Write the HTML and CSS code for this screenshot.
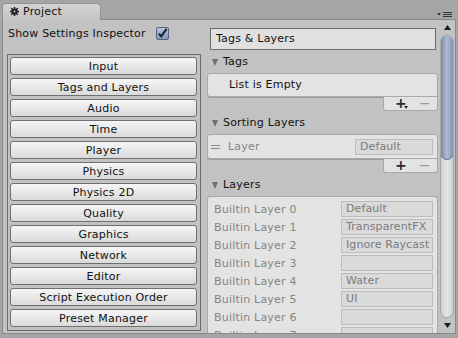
FILE: index.html
```html
<!DOCTYPE html>
<html lang="en">
<head>
    <meta charset="UTF-8">
    <title>Project Settings</title>
    <link rel="stylesheet" href="styles.css">
</head>
<body>
<div class="tabbar">
    <div class="tab">
        <svg class="gear" width="9" height="9" viewBox="0 0 9 9">
            <g stroke="#1e1e1e" stroke-width="1.6">
                <line x1="4.5" y1="0" x2="4.5" y2="9"/>
                <line x1="0" y1="4.5" x2="9" y2="4.5"/>
                <line x1="1.3" y1="1.3" x2="7.7" y2="7.7"/>
                <line x1="7.7" y1="1.3" x2="1.3" y2="7.7"/>
            </g>
            <circle cx="4.5" cy="4.5" r="3" fill="#1e1e1e"/>
            <circle cx="4.5" cy="4.5" r="1" fill="#cfcfcf"/>
        </svg>
        <span>Project</span>
    </div>
    <svg class="menu" width="16" height="6" viewBox="0 0 16 6">
        <polygon points="0,1 4,1 2,3.5" fill="#333"/>
        <rect x="6" y="0" width="9" height="1" fill="#333"/>
        <rect x="6" y="2" width="9" height="1" fill="#333"/>
        <rect x="6" y="4" width="9" height="1" fill="#333"/>
    </svg>
</div>

<div class="window">
    <div class="side">
        <div class="toggle">
            <span>Show Settings Inspector</span>
            <svg class="check" width="13" height="13" viewBox="0 0 13 13">
                <defs>
                    <linearGradient id="cb" x1="0" y1="0" x2="0" y2="1">
                        <stop offset="0" stop-color="#b9c6da"/>
                        <stop offset="1" stop-color="#8194b4"/>
                    </linearGradient>
                </defs>
                <rect x="0.5" y="0.5" width="12" height="12" rx="1.5" fill="url(#cb)" stroke="#56647c"/>
                <path d="M2.8 6.6 L5.2 9.4 L10.6 1.8" fill="none" stroke="#152238" stroke-width="2"/>
            </svg>
        </div>
        <div class="nav">
            <div class="btn">Input</div>
            <div class="btn">Tags and Layers</div>
            <div class="btn">Audio</div>
            <div class="btn">Time</div>
            <div class="btn">Player</div>
            <div class="btn">Physics</div>
            <div class="btn">Physics 2D</div>
            <div class="btn">Quality</div>
            <div class="btn">Graphics</div>
            <div class="btn">Network</div>
            <div class="btn">Editor</div>
            <div class="btn">Script Execution Order</div>
            <div class="btn">Preset Manager</div>
        </div>
    </div>

    <div class="main">
        <div class="title">Tags &amp; Layers</div>

        <div class="fold"><i class="tri"></i>Tags</div>
        <div class="list list-tags">List is Empty</div>
        <div class="foot">
            <span class="plus">+<i class="drop"></i></span><span class="minus">&minus;</span>
        </div>

        <div class="fold"><i class="tri"></i>Sorting Layers</div>
        <div class="list list-sort">
            <span class="handle"></span>
            <span class="label">Layer</span>
            <span class="field field-sort">Default</span>
        </div>
        <div class="foot">
            <span class="plus">+</span><span class="minus">&minus;</span>
        </div>

        <div class="fold"><i class="tri"></i>Layers</div>
        <div class="list list-layers">
            <div class="row"><span class="label">Builtin Layer 0</span><span class="field">Default</span></div>
            <div class="row"><span class="label">Builtin Layer 1</span><span class="field">TransparentFX</span></div>
            <div class="row"><span class="label">Builtin Layer 2</span><span class="field">Ignore Raycast</span></div>
            <div class="row"><span class="label">Builtin Layer 3</span><span class="field"></span></div>
            <div class="row"><span class="label">Builtin Layer 4</span><span class="field">Water</span></div>
            <div class="row"><span class="label">Builtin Layer 5</span><span class="field">UI</span></div>
            <div class="row"><span class="label">Builtin Layer 6</span><span class="field"></span></div>
            <div class="row"><span class="label">Builtin Layer 7</span><span class="field"></span></div>
        </div>
    </div>

    <div class="scroll">
        <svg class="arrow" width="7" height="5" viewBox="0 0 7 5"><polygon points="0,5 7,5 3.5,0" fill="#1a1a1a"/></svg>
        <div class="track">
            <div class="thumb"></div>
        </div>
        <svg class="arrow" width="7" height="5" viewBox="0 0 7 5"><polygon points="0,0 7,0 3.5,5" fill="#1a1a1a"/></svg>
    </div>
</div>
</body>
</html>
```

FILE: styles.css
```css
* {
    padding: 0;
    margin: 0;
    box-sizing: border-box;
}

body {
    width: 458px;
    height: 338px;
    overflow: hidden;
    background: #a5a5a5;
    font-family: "DejaVu Sans", Verdana, sans-serif;
    font-size: 11px;
    letter-spacing: 0.2px;
    color: #111;
}

/* tab strip */
.tabbar {
    height: 19px;
    display: flex;
    justify-content: space-between;
    align-items: flex-end;
}

.tab {
    width: 99px;
    height: 17px;
    margin-left: 2px;
    margin-bottom: -1px;
    position: relative;
    z-index: 1;
    display: flex;
    align-items: center;
    padding: 0 0 1px 7px;
    border: 1px solid #939393;
    border-bottom: 0;
    border-radius: 4px 4px 0 0;
    background: linear-gradient(#d3d3d3, #c4c4c4);
}

.tab span {
    margin-left: 4px;
}

.menu {
    align-self: flex-start;
    margin: 12px 5px 0 0;
}

/* window */
.window {
    height: 315px;
    margin: 0 2px;
    display: flex;
    border: 1px solid #888;
    background: #c2c2c2;
}

.side {
    width: 201px;
    padding-left: 4px;
    display: flex;
    flex-direction: column;
}

.toggle {
    height: 26px;
    display: flex;
    align-items: center;
    padding-left: 1px;
}

.check {
    margin-left: 10px;
}

.nav {
    flex: 1;
    width: 194px;
    margin: 8px 0 2px;
    padding: 2px 3px 0 2px;
    border: 1px solid #6a6a6a;
    overflow: hidden;
}

.btn {
    height: 18px;
    margin-bottom: 3px;
    line-height: 17px;
    text-align: center;
    border: 1px solid #6f6f6f;
    border-radius: 3px;
    background: linear-gradient(#f6f6f6, #dadada);
}

/* inspector */
.main {
    width: 236px;
    padding: 8px 2px 0 3px;
    display: flex;
    flex-direction: column;
    overflow: hidden;
}

.main > * {
    flex-shrink: 0;
}

.title {
    height: 22px;
    margin: 0 2px 0 3px;
    padding-left: 5px;
    line-height: 20px;
    border: 1px solid #6c6c6c;
    background: #e0e0e0;
}

.fold {
    height: 16px;
    margin: 4px 0 3px;
    padding-left: 5px;
    line-height: 16px;
    display: flex;
    align-items: center;
}

.tri {
    width: 0;
    height: 0;
    margin-right: 5px;
    border-left: 3.5px solid transparent;
    border-right: 3.5px solid transparent;
    border-top: 7px solid #707070;
}

.list {
    border: 1px solid #a9a9a9;
    border-radius: 3px 3px 0 3px;
    background: #e3e3e3;
    box-shadow: 0 1px 0 #9c9c9c;
}

.list-tags {
    height: 24px;
    padding-left: 21px;
    line-height: 22px;
}

.list-sort {
    height: 25px;
    display: flex;
    align-items: center;
    padding: 0 4px 0 3px;
}

.handle {
    width: 9px;
    height: 4px;
    border-top: 1px solid #8a8a8a;
    border-bottom: 1px solid #8a8a8a;
    margin: 1px 8px 0 0;
}

.label {
    flex: 1;
    color: #858585;
}

.foot {
    width: 55px;
    height: 14px;
    align-self: flex-end;
    display: flex;
    padding-left: 10px;
    border: 1px solid #a9a9a9;
    border-top: 0;
    border-radius: 0 0 3px 3px;
    background: #e3e3e3;
    line-height: 12px;
    font-size: 14px;
}

.plus {
    width: 14px;
    text-align: center;
    color: #2a2a2a;
    font-weight: bold;
    position: relative;
}

.drop {
    position: absolute;
    left: 10px;
    top: 9px;
    width: 0;
    height: 0;
    border-left: 2px solid transparent;
    border-right: 2px solid transparent;
    border-top: 3px solid #2a2a2a;
}

.minus {
    width: 14px;
    margin-left: 10px;
    text-align: center;
    color: #9a9a9a;
}

.field {
    width: 92px;
    height: 16px;
    padding-left: 4px;
    line-height: 14px;
    border: 1px solid #bcbcbc;
    background: #dadada;
    color: #7b7b7b;
    letter-spacing: 0.1px;
    white-space: nowrap;
    overflow: hidden;
}

.field-sort {
    width: 78px;
}

.list-layers {
    flex: 1 0 auto;
    padding: 3px 4px 0 6px;
    border-bottom: 0;
    border-radius: 3px 3px 0 0;
    box-shadow: none;
}

.row {
    height: 18px;
    display: flex;
    align-items: center;
}

/* scrollbar */
.scroll {
    width: 15px;
    padding-right: 1px;
    display: flex;
    flex-direction: column;
    align-items: center;
}

.arrow {
    margin: 5px 0;
    flex-shrink: 0;
}

.track {
    flex: 1;
    width: 14px;
    border: 1px solid #a6a6a6;
    border-radius: 7px;
    background: linear-gradient(90deg, #cfcfcf, #e6e6e6 50%, #cfcfcf);
    overflow: hidden;
}

.thumb {
    height: 125px;
    margin: -1px;
    border: 1px solid #5c6d8b;
    border-radius: 7px;
    background: linear-gradient(90deg, #7d8eac, #aebcd2 50%, #8394b1);
}
```
